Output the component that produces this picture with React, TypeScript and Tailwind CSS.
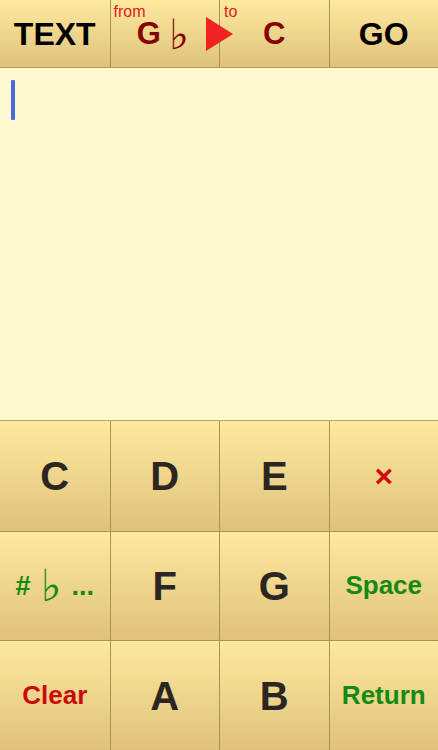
import React from 'react';

const cell = 'flex items-center justify-center bg-gradient-to-b from-[#fee99f] to-[#dfc27b] border-[#a89158]';
const dark = 'text-[40px] font-bold text-[#2b2622]';

function Flat({ className = '' }: { className?: string }) {
  return <span className={`font-['DejaVu_Sans',sans-serif] font-normal leading-none ${className}`}>♭</span>;
}

export default function App() {
  return (
    <div className="w-[438px] h-[750px] flex flex-col font-['Liberation_Sans',Arial,sans-serif] bg-[#fef9d1] overflow-hidden">
      {/* top bar */}
      <div className="h-[68px] grid grid-cols-4 border-b border-[#b49a5f]">
        <div className={`${cell} text-[32px] font-bold text-black`}>TEXT</div>
        <div className={`${cell} border-l relative`}>
          <span className="absolute left-[3px] top-[0px] text-[16px] text-[#e01a1a]">from</span>
          <span className="mt-[2px] ml-[-4px] flex items-center gap-[8px] text-[#860202]">
            <span className="text-[31px] font-bold">G</span>
            <Flat className="text-[42px] text-[#860202]" />
          </span>
        </div>
        <div className={`${cell} border-l relative`}>
          <span className="absolute left-[4px] top-[0px] text-[16px] text-[#e01a1a]">to</span>
          <span className="mt-[2px] text-[31px] font-bold text-[#860202]">C</span>
          <svg className="absolute left-[-14px] top-[17px]" width="27" height="34" viewBox="0 0 27 34">
            <polygon points="0,0 27,17 0,34" fill="#ef2121" />
          </svg>
        </div>
        <div className={`${cell} border-l text-[32px] font-bold text-black`}>GO</div>
      </div>

      {/* text area */}
      <div className="flex-1 bg-[#fef9d1] pt-[12px] pl-[11px]">
        <div className="w-[4px] h-[40px] bg-[#4a6ae0] rounded-[1px]" />
      </div>

      {/* keypad */}
      <div className="grid grid-cols-4 grid-rows-3 h-[330px] border-t border-[#b9a264]">
        <div className={`${cell} ${dark}`}>C</div>
        <div className={`${cell} border-l ${dark}`}>D</div>
        <div className={`${cell} border-l ${dark}`}>E</div>
        <div className={`${cell} border-l text-[32px] font-bold text-[#d40a0a]`}>×</div>

        <div className={`${cell} border-t text-[#138a13] gap-[10px]`}>
          <span className="text-[27px] font-bold">#</span>
          <Flat className="text-[44px]" />
          <span className="text-[27px] font-bold">...</span>
        </div>
        <div className={`${cell} border-l border-t ${dark}`}>F</div>
        <div className={`${cell} border-l border-t ${dark}`}>G</div>
        <div className={`${cell} border-l border-t text-[26px] font-bold text-[#138a13]`}>Space</div>

        <div className={`${cell} border-t text-[26px] font-bold text-[#cc0a0a]`}>Clear</div>
        <div className={`${cell} border-l border-t ${dark}`}>A</div>
        <div className={`${cell} border-l border-t ${dark}`}>B</div>
        <div className={`${cell} border-l border-t text-[26px] font-bold text-[#138a13]`}>Return</div>
      </div>
    </div>
  );
}
